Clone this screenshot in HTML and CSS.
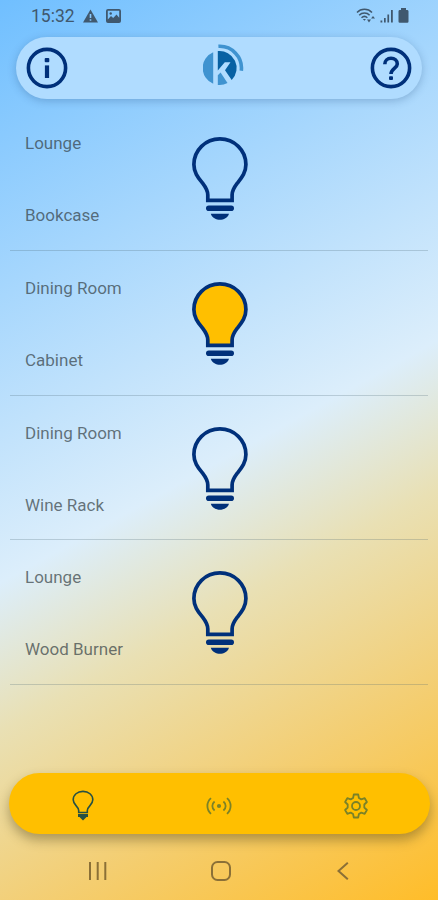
FILE: index.html
```html
<!DOCTYPE html>
<html lang="en">
<head>
    <title>Lights</title>
    <meta charset="UTF-8">
    <meta name="viewport" content="width=device-width, initial-scale=1.0">
    <link rel="stylesheet" href="styles.css">
</head>
<body>
    <!-- shared bulb shape, the glass is filled when the light is on -->
    <svg class="defs">
        <symbol id="bulb" viewBox="0 0 56 84">
            <path class="glass" d="M15.8 63.3V58C15.8 53.5 13.5 50 10.6 46.2C6.5 41 1.9 36 1.9 27.5C1.9 13.2 13.5 1.9 27.9 1.9S53.9 13.2 53.9 27.5C53.9 36 49.4 41 45.3 46.2C42.4 50 40.1 53.5 40.1 58V63.3Z" stroke="currentColor" stroke-width="3.7"/>
            <rect x="14" y="68.4" width="28" height="5.6" rx="2.8" fill="currentColor"/>
            <path d="M18.8 76.8H37C35.8 80.8 31.5 82.8 27.9 82.8S20 80.8 18.8 76.8Z" fill="currentColor"/>
        </symbol>
    </svg>

    <div class="status-bar">
        <span class="time">15:32</span>
        <svg class="warning" width="15" height="14" viewBox="0 0 15 14"><path d="M7.5 0.5L15 13.5H0Z"/><path class="cut" d="M7.5 5V9M7.5 10.2V11.8"/></svg>
        <svg class="photo" width="15" height="14" viewBox="0 0 15 14"><path fill-rule="evenodd" d="M2 0H13A2 2 0 0 1 15 2V12A2 2 0 0 1 13 14H2A2 2 0 0 1 0 12V2A2 2 0 0 1 2 0ZM1.8 1.8V10.5L5 7L7.2 9L10.5 5.5L13.2 8.8V1.8Z"/><circle cx="4.7" cy="4.5" r="1.2"/></svg>
        <div class="status-right">
            <svg width="20" height="15" viewBox="0 0 20 15"><g fill="none" stroke="#40586e" stroke-width="1.5"><path d="M1 4.5C5 0.2 12 0.2 16 4.5"/><path d="M3.2 7.2C6 4.3 11 4.3 13.6 7.2"/><path d="M5.5 9.7C7.2 8.2 9.7 8.2 11.4 9.7"/></g><path d="M6.8 11H10L8.4 12.8ZM11 11.5H15L13 14.5ZM15 10.5L17 8L19 10.5Z"/></svg>
            <svg width="14" height="14" viewBox="0 0 14 14"><path d="M0.5 11.5H2.3V13.5H0.5ZM4 9H5.7V13.5H4ZM7.4 5.5H9.1V13.5H7.4ZM11 1H12.8V13.5H11Z"/></svg>
            <svg class="battery" width="11" height="15" viewBox="0 0 11 15"><path d="M3 0H8V2H9.5A1.2 1.2 0 0 1 10.5 3.2V13.5A1.2 1.2 0 0 1 9.3 14.7H1.7A1.2 1.2 0 0 1 .5 13.5V3.2A1.2 1.2 0 0 1 1.5 2H3Z"/></svg>
        </div>
    </div>

    <header class="top-bar">
        <svg width="42" height="42" viewBox="0 0 42 42"><circle cx="21" cy="21" r="18.6" fill="none" stroke="currentColor" stroke-width="3.6"/><rect x="18.7" y="11" width="4.6" height="4.2" rx="1" fill="currentColor"/><rect x="18.9" y="18.4" width="4.2" height="12.6" fill="currentColor"/></svg>
        <svg class="logo" width="42" height="43" viewBox="0 0 42 43">
            <path fill="#3f93d0" d="M10.2 8.3V39.7A17 17 0 0 1 10.2 8.3Z"/>
            <path fill="#0861a3" d="M14.8 7.1A17 17 0 0 1 28.7 36L22 26.2L27.5 18.3H21.8L14.8 26.5Z"/>
            <path fill="#3f93d0" d="M14.8 31.2L17.6 28.4L24.5 39.1A17 17 0 0 1 14.8 40.9Z"/>
            <path fill="none" stroke="#3f93d0" stroke-width="3.6" d="M15.4 2.3A21.8 21.8 0 0 1 38.3 26.7"/>
        </svg>
        <svg width="42" height="42" viewBox="0 0 42 42"><g fill="none" stroke="currentColor"><circle cx="21" cy="21" r="18.6" stroke-width="3.6"/><path stroke-width="3.6" d="M14.8 17.2C14.8 13.8 17.4 11.2 21 11.2S27.3 13.8 27.3 17C27.3 21.3 21 21.8 21 27"/></g><rect x="19" y="29.2" width="4" height="3.8" rx="1" fill="currentColor"/></svg>
    </header>

    <main class="lights">
        <div class="light">
            <div class="names"><span>Lounge</span><span>Bookcase</span></div>
            <svg class="bulb"><use href="#bulb"/></svg>
        </div>
        <div class="light on">
            <div class="names"><span>Dining Room</span><span>Cabinet</span></div>
            <svg class="bulb"><use href="#bulb"/></svg>
        </div>
        <div class="light">
            <div class="names"><span>Dining Room</span><span>Wine Rack</span></div>
            <svg class="bulb"><use href="#bulb"/></svg>
        </div>
        <div class="light">
            <div class="names"><span>Lounge</span><span>Wood Burner</span></div>
            <svg class="bulb"><use href="#bulb"/></svg>
        </div>
    </main>

    <nav class="tabs">
        <div class="tab active">
            <svg width="22" height="31" viewBox="0 0 22 31"><path d="M6.7 22.5V20.5C6.7 16.5 1.2 15 1.2 9.8C1.2 4.9 5.4 1.4 11 1.4S20.8 4.9 20.8 9.8C20.8 15 15.3 16.5 15.3 20.5V22.5Z" fill="none" stroke="currentColor" stroke-width="1.6"/><path d="M6 24H16V27H14.5L11 30.5L7.5 27H6Z" fill="currentColor"/></svg>
        </div>
        <div class="tab">
            <svg width="26" height="18" viewBox="0 0 26 18"><g fill="none" stroke="currentColor" stroke-width="1.8"><path d="M5 1.2C0.2 5.5 0.2 12.5 5 16.8M21 1.2C25.8 5.5 25.8 12.5 21 16.8M8.6 4.5C5.6 7 5.6 11 8.6 13.5M17.4 4.5C20.4 7 20.4 11 17.4 13.5"/></g><circle cx="13" cy="9" r="2.1" fill="currentColor"/></svg>
        </div>
        <div class="tab">
            <svg width="26" height="26" viewBox="0 0 26 26"><g fill="none" stroke="currentColor" stroke-width="1.8" stroke-linejoin="round"><path d="M10.8 1.5H15.2L15.9 5L18.3 6.4L21.7 5.2L23.9 9L21.3 11.5V14.5L23.9 17L21.7 20.8L18.3 19.6L15.9 21L15.2 24.5H10.8L10.1 21L7.7 19.6L4.3 20.8L2.1 17L4.7 14.5V11.5L2.1 9L4.3 5.2L7.7 6.4L10.1 5Z"/><circle cx="13" cy="13" r="4"/></g></svg>
        </div>
    </nav>

    <div class="system-nav">
        <svg width="20" height="18" viewBox="0 0 20 18"><path d="M2 0V18M9.7 0V18M17.3 0V18"/></svg>
        <svg class="home" width="20" height="20" viewBox="0 0 20 20"><rect x="1" y="1" width="18" height="18" rx="5.5"/></svg>
        <svg width="12" height="18" viewBox="0 0 12 18"><path d="M10.8 .8L1.5 9L10.8 17.2"/></svg>
    </div>
</body>
</html>
```
FILE: styles.css
```css
:root {
    --navy: #00307a;
    --amber: #ffbf00;
    --status: #40586e;
}

* {
    box-sizing: border-box;
}

body {
    margin: 0;
    height: 900px;
    display: flex;
    flex-direction: column;
    overflow: hidden;
    font-family: Roboto, sans-serif;
    background: linear-gradient(151deg, #70bfff 0%, #dceefb 51%, #e9e0b4 64%, #f3cf76 80%, #ffbd29 100%);
}

svg {
    display: block;
    flex-shrink: 0;
}

.defs {
    position: absolute;
    width: 0;
    height: 0;
}

.status-bar {
    height: 37px;
    padding: 0 29px 6px 31px;
    display: flex;
    align-items: center;
    color: var(--status);
    fill: var(--status);
}
.time {
    width: 52px;
    font-size: 17.5px;
    line-height: 20px;
}
.warning .cut {
    stroke: #86c9ff;
    stroke-width: 1.6;
}
.photo {
    margin-left: 8px;
}
.status-right {
    margin-left: auto;
    display: flex;
    align-items: center;
    gap: 4px;
}

.top-bar {
    height: 62px;
    margin: 0 16px;
    padding: 0 10px;
    display: flex;
    align-items: center;
    justify-content: space-between;
    border-radius: 31px;
    background: #b0dcff;
    color: var(--navy);
    box-shadow: 0 2px 8px rgba(30, 70, 120, 0.28);
}
.logo {
    margin: 0 0 5px 10px;
}

.lights {
    padding: 7px 10px 0;
    flex: 1;
}
.light {
    height: 144.8px;
    padding: 0 15px;
    display: grid;
    grid-template-columns: 167px 56px 1fr;
    align-items: start;
    border-bottom: 1px solid rgba(70, 100, 110, 0.25);
}
.names {
    height: 144px;
    padding-top: 27px;
    display: flex;
    flex-direction: column;
    gap: 52px;
    font-size: 17px;
    line-height: 20px;
    color: rgba(50, 60, 65, 0.7);
}
.bulb {
    width: 56px;
    height: 84px;
    margin-top: 31px;
    color: var(--navy);
}
.glass {
    fill: var(--glass, none);
}
.on {
    --glass: var(--amber);
}

.tabs {
    height: 61px;
    margin: 0 8px 0 9px;
    padding: 0 6px 0 5px;
    display: grid;
    grid-template-columns: repeat(3, 1fr);
    align-items: center;
    justify-items: center;
    border-radius: 31px;
    background: var(--amber);
    color: #7b8227;
    box-shadow: 0 6px 12px rgba(70, 60, 20, 0.4);
}
.tab {
    padding-top: 4px;
}
.active {
    padding-left: 2px;
    color: #265043;
}

.system-nav {
    height: 66px;
    padding: 8px 89px 0 88px;
    display: flex;
    align-items: center;
    justify-content: space-between;
    fill: none;
    stroke: #8b7037;
    stroke-width: 2;
}
.home {
    margin-right: 4px;
}
```
